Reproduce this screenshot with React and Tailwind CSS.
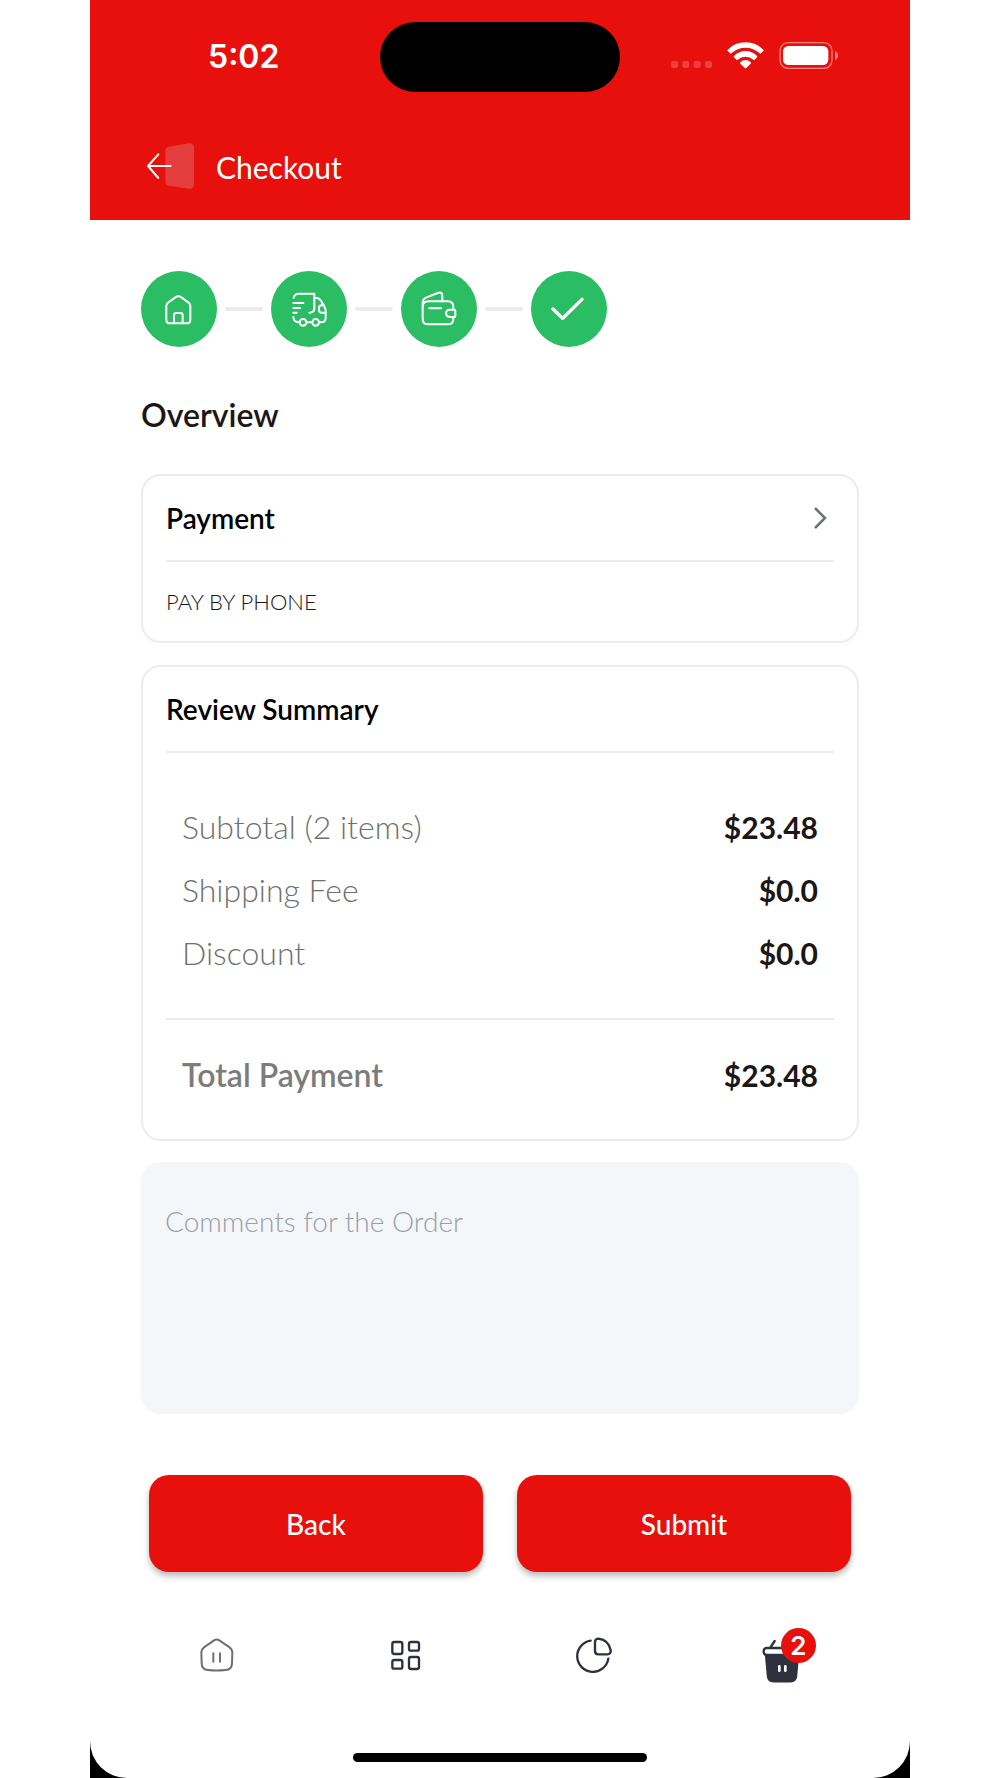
import React, { useState } from 'react';

const steps = [
  { id: 'address', label: 'Address', Icon: HomeStepIcon },
  { id: 'shipping', label: 'Shipping', Icon: TruckIcon },
  { id: 'payment', label: 'Payment', Icon: WalletIcon },
  { id: 'overview', label: 'Overview', Icon: CheckIcon }
];

const summaryRows = [
  { label: 'Subtotal (2 items)', value: '$23.48' },
  { label: 'Shipping Fee', value: '$0.0' },
  { label: 'Discount', value: '$0.0' }
];

function HomeStepIcon() {
  return (
    <svg width="32" height="32" viewBox="0 0 96 96" fill="none" stroke="#fff" strokeWidth="6" strokeLinecap="round" strokeLinejoin="round">
      <path d="M10 39Q10 32 16 28L37 13Q46 7 55 13L76 28Q82 32 82 39V80Q82 91 71 91H21Q10 91 10 80Z" />
      <path d="M33 91V67Q33 60 40 60H52Q59 60 59 67V91" />
    </svg>
  );
}

function TruckIcon() {
  return (
    <svg width="35" height="35" viewBox="0 0 105 105" fill="none" stroke="#fff" strokeWidth="6" strokeLinecap="round" strokeLinejoin="round">
      <path d="M5 17Q8 5 21 5H67V50Q67 61 52 62" />
      <path d="M4 33H34M4 48H24M4 62H14" />
      <path d="M4 75Q5 91 22 91M44 91H60M82 91H87Q101 91 101 77V56Q101 51 98 46L88 28Q82 18 74 18H67" />
      <path d="M100 62H89Q81 62 81 54V48Q81 40 89 40H95" />
      <circle cx="33" cy="91" r="10" />
      <circle cx="71" cy="91" r="10" />
    </svg>
  );
}

function WalletIcon() {
  return (
    <svg width="36" height="36" viewBox="0 0 108 108" fill="none" stroke="#fff" strokeWidth="6" strokeLinecap="round" strokeLinejoin="round">
      <path d="M97 55V48Q97 31 80 31H22Q5 31 5 48V83Q5 100 22 100H80Q97 100 97 83V79" />
      <path d="M5 47V35Q5 24 15 20L50 6Q64 1 64 15V31" />
      <path d="M25 52H60" />
      <path d="M103 60V74Q103 78 98 78H86Q76 77 75 67Q76 56 86 56H98Q103 56 103 60Z" />
    </svg>
  );
}

function CheckIcon() {
  return (
    <svg width="36" height="36" viewBox="0 0 108 108" fill="none" stroke="#fff" strokeWidth="10" strokeLinecap="round" strokeLinejoin="round">
      <path d="M6 54L35 82L93 25" />
    </svg>
  );
}

function BackIcon() {
  return (
    <svg width="50" height="48" viewBox="0 0 150 144" fill="none">
      <path d="M61 22Q62 13 71 11L132 1Q147 0 147 16V123Q147 138 132 137L71 128Q62 126 61 117Z" fill="#e33d3d" />
      <path d="M77 69H9M40 34L9 69L40 105" stroke="#fff" strokeWidth="6" strokeLinecap="round" strokeLinejoin="round" />
    </svg>
  );
}

function StatusIcons() {
  return (
    <div className="flex items-center gap-[15px]">
      <svg width="41" height="27" viewBox="0 0 123 81" fill="#ed4040">
        <rect x="0" y="57" width="21" height="21" rx="6" />
        <rect x="34" y="57" width="21" height="21" rx="6" />
        <rect x="68" y="57" width="21" height="21" rx="6" />
        <rect x="102" y="57" width="21" height="21" rx="6" />
      </svg>
      <svg width="37" height="27" viewBox="0 0 111 81" fill="#fff">
        <path d="M2 23Q24 1 55.500 1T109 23Q111 25 109 27L102 34Q100 36 98 34Q80 17 55.500 17T13 34Q11 36 9 34L2 27Q0 25 2 23Z" />
        <path d="M21 42Q36 27 55.500 27T90 42Q92 44 90 46L83 53Q81 55 79 53Q69 44 55.500 44T32 53Q30 55 28 53L21 46Q19 44 21 42Z" />
        <path d="M40 61Q47 54 55.500 54T71 61Q73 63 71 65L58 78Q55.500 80 53 78L40 65Q38 63 40 61Z" />
      </svg>
      <svg width="60" height="27" viewBox="0 0 180 81">
        <rect x="3" y="2" width="156" height="77" rx="24" fill="none" stroke="#f58080" strokeWidth="4" />
        <rect x="12" y="12" width="136" height="57" rx="16" fill="#fff" />
        <path d="M168 28Q177 32 177 41T168 54Z" fill="#f58080" />
      </svg>
    </div>
  );
}

function NavHomeIcon() {
  return (
    <svg width="34" height="34" viewBox="0 0 102 102" fill="none" stroke="#6f7075" strokeWidth="6" strokeLinecap="round" strokeLinejoin="round">
      <path d="M42 7Q50 2 58 7L89 28Q97 34 97 43L96 77Q95 95 77 96Q50 99 24 96Q6 95 5 77L4 43Q4 34 12 28Z" />
      <path d="M40 46V71M60 46V71" />
    </svg>
  );
}

function NavGridIcon() {
  return (
    <svg width="31" height="31" viewBox="0 0 93 93" fill="none" stroke="#2f323e" strokeWidth="7">
      <rect x="7" y="6" width="30" height="36" rx="6" />
      <rect x="57" y="6" width="30" height="26" rx="6" />
      <rect x="7" y="60" width="30" height="26" rx="6" />
      <rect x="57" y="51" width="30" height="36" rx="6" />
    </svg>
  );
}

function NavPieIcon() {
  return (
    <svg width="36" height="36" viewBox="0 0 108 108" fill="none" stroke="#2f323e" strokeWidth="7" strokeLinecap="round" strokeLinejoin="round">
      <path d="M44 11A47 47 0 1 0 97 65" />
      <path d="M57 15Q57 5 68 5Q98 9 104 40Q105 52 94 52H67Q57 52 57 42Z" />
    </svg>
  );
}

function NavBasketIcon() {
  return (
    <svg width="40" height="44" viewBox="0 0 120 132" fill="none" stroke="#2f323e" strokeWidth="7" strokeLinecap="round" strokeLinejoin="round">
      <path d="M38 6L26 24M80 6L92 24" />
      <path d="M12 47L18 113Q20 127 34 127H86Q100 127 102 113L108 47Z" fill="#2f323e" />
      <rect x="5" y="27" width="110" height="21" rx="9" fill="#fff" />
      <path d="M52 82V95M70 82V95" stroke="#fff" strokeWidth="8" />
    </svg>
  );
}

const Card = ({ children }) => (
  <section className="rounded-[20px] border-2 border-[#ededee] px-[23px]">{children}</section>
);

const SummaryRow = ({ label, value, total }) => (
  <div className="flex h-[63px] items-center justify-between leading-9">
    <dt className={total ? 'text-[32px] font-semibold text-[#7c7c7c]' : 'text-[32px] font-light text-[#707070]'}>{label}</dt>
    <dd className="text-[30px] font-bold text-[#1b1617]">{value}</dd>
  </div>
);

const App = () => {
  const [comment, setComment] = useState('');
  const cartCount = 2;

  return (
    <div className="min-h-screen bg-white font-['Lato','Liberation_Sans',sans-serif]">
      <div className="mx-auto w-full max-w-[820px] bg-black">
        <div className="overflow-hidden rounded-b-[37px] bg-white">
          <header className="bg-[#e7100c] pb-[29px]">
            {/* Status bar */}
            <div className="grid grid-cols-[1fr_240px_1fr] items-center pt-[22px]">
              <span className="pl-[118px] font-['Inter',sans-serif] text-[32px] leading-10 font-semibold text-white">5:02</span>
              <div className="h-[70px] rounded-full bg-black" />
              <div className="flex justify-end pr-[71px] pb-1">
                <StatusIcons />
              </div>
            </div>

            <div className="mt-[51px] flex items-center gap-[21px] pl-[55px]">
              <button type="button" aria-label="Go back">
                <BackIcon />
              </button>
              <h1 className="text-[30px] leading-9 text-white">Checkout</h1>
            </div>
          </header>

          <main className="px-[51px] pt-[51px]">
            {/* Steps */}
            <ol className="flex items-center gap-2">
              {steps.map(({ id, label, Icon }, index) => (
                <React.Fragment key={id}>
                  {index > 0 && <li aria-hidden="true" className="h-1 w-[38px] rounded-full bg-[#ebecee]" />}
                  <li aria-label={label} className="flex size-[76px] items-center justify-center rounded-full bg-[#2abd63]">
                    <Icon />
                  </li>
                </React.Fragment>
              ))}
            </ol>

            <h2 className="mt-[50px] mb-[41px] text-[32px] leading-9 font-semibold text-[#1b1617]">Overview</h2>

            <Card>
              <div className="flex h-[86px] items-center justify-between border-b-2 border-[#ededee]">
                <h3 className="text-[28px] leading-8 font-semibold text-black">Payment</h3>
                <button type="button" aria-label="Edit payment" className="pr-1">
                  <svg width="18" height="24" viewBox="0 0 18 24" fill="none" stroke="#6a737c" strokeWidth="2.500">
                    <path d="M3 2L13 12L3 22" />
                  </svg>
                </button>
              </div>
              <p className="flex h-[79px] items-center text-[22px] leading-8 font-light text-[#1b1617]">PAY BY PHONE</p>
            </Card>

            <div className="mt-[22px]">
              <Card>
                <h3 className="flex h-[86px] items-center border-b-2 border-[#ededee] text-[28px] leading-8 font-semibold text-black">
                  Review Summary
                </h3>
                <dl>
                  <div className="border-b-2 border-[#ebecf0] px-4 pt-[42px] pb-[34px]">
                    {summaryRows.map((row) => (
                      <SummaryRow key={row.label} label={row.label} value={row.value} />
                    ))}
                  </div>
                  <div className="px-4 pt-[23px] pb-[33px]">
                    <SummaryRow label="Total Payment" value="$23.48" total />
                  </div>
                </dl>
              </Card>
            </div>

            <textarea
              aria-label="Comments for the Order"
              value={comment}
              onChange={(e) => setComment(e.target.value)}
              placeholder="Comments for the Order"
              className="mt-[21px] block h-[252px] w-full resize-none rounded-[20px] bg-[#f4f6fa] px-6 pt-[41px] text-[28px] leading-9 font-light text-[#1b1617] outline-none placeholder:text-[#9a9ea8]"
            />

            <div className="mt-[61px] grid grid-cols-2 gap-[34px] px-2">
              <button type="button" className="h-[97px] rounded-[20px] bg-[#e7100c] text-[28px] leading-8 font-medium text-white shadow-[0_4px_6px_rgba(0,0,0,0.28)]">
                Back
              </button>
              <button type="submit" className="h-[97px] rounded-[20px] bg-[#e7100c] text-[28px] leading-8 font-medium text-white shadow-[0_4px_6px_rgba(0,0,0,0.28)]">
                Submit
              </button>
            </div>
          </main>

          {/* Bottom navigation */}
          <nav className="mt-[47px] grid h-[72px] grid-cols-4 place-items-center pr-[34px] pl-[33px]">
            <a href="#home" aria-label="Home">
              <NavHomeIcon />
            </a>
            <a href="#categories" aria-label="Categories">
              <NavGridIcon />
            </a>
            <a href="#orders" aria-label="Orders">
              <NavPieIcon />
            </a>
            <a href="#cart" aria-label="Cart" className="relative pt-3">
              <NavBasketIcon />
              <span className="absolute top-px left-[19px] flex size-[35px] items-center justify-center rounded-full bg-[#e7100c] font-['Inter',sans-serif] text-[26px] leading-8 font-semibold text-white">
                {cartCount}
              </span>
            </a>
          </nav>

          <div className="flex justify-center pt-[62px] pb-4">
            <div className="h-[9px] w-[294px] rounded-full bg-black" />
          </div>
        </div>
      </div>
    </div>
  );
};

export default App;
